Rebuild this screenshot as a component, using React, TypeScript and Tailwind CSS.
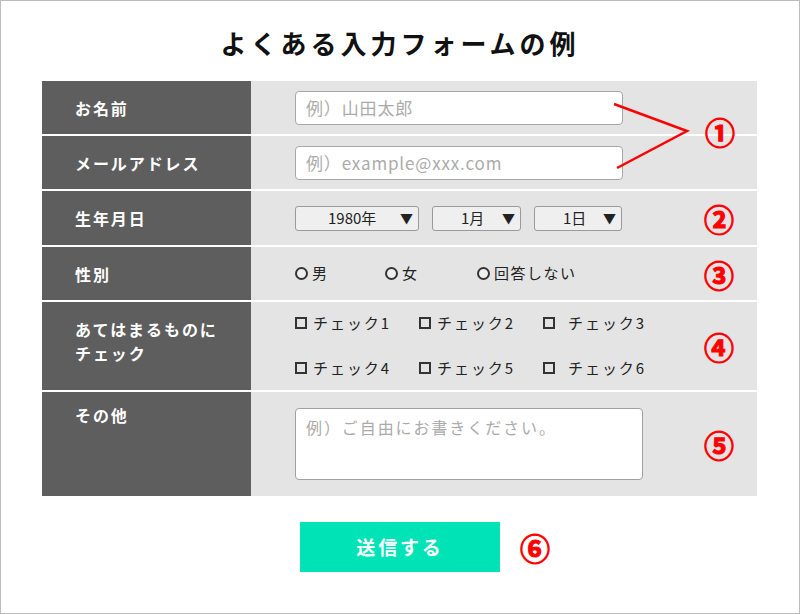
import React from 'react'

const jp = { fontFamily: '"Noto Sans CJK JP", "Noto Sans", sans-serif' }

function Num({ n }: { n: string }) {
  return (
    <div className="w-[40px] mr-[18px] flex justify-center text-[30px] font-bold leading-none text-[#ff0000] [-webkit-text-stroke:1px_#ff0000]">
      {n}
    </div>
  )
}

interface RowProps {
  label: React.ReactNode
  h: string
  labelPad?: string
  num?: string
  children: React.ReactNode
}

function Row({ label, h, labelPad = 'pt-[15px]', num, children }: RowProps) {
  return (
    <div className={`flex ${h}`}>
      <div
        className={`w-[209px] shrink-0 bg-[#5e5e5e] pl-[33px] ${labelPad} text-white font-bold text-[16px] leading-[24px] tracking-[0.12em]`}
      >
        {label}
      </div>
      <div className="flex-1 bg-[#e4e4e4] flex items-center pl-[44px]">
        <div className="flex-1">{children}</div>
        {num ? <Num n={num} /> : <div className="w-[40px] mr-[18px]" />}
      </div>
    </div>
  )
}

function Select({ w, text, textPad }: { w: string; text: string; textPad: string }) {
  return (
    <div
      className={`${w} h-[25px] rounded-[3px] border border-[#9a9a9a] bg-[#efefef] flex items-center text-[15px] text-[#222]`}
    >
      <span className={`${textPad}`}>{text}</span>
      <span className="ml-auto mr-[5px] text-[13px]">▼</span>
    </div>
  )
}

function Radio({ label }: { label: string }) {
  return (
    <div className="flex items-center gap-[4px] text-[15px] text-[#222] tracking-[0.1em]">
      <span className="w-[13px] h-[13px] rounded-full border-2 border-[#333] bg-white/40" />
      <span>{label}</span>
    </div>
  )
}

function Check({ label, wide }: { label: string; wide?: boolean }) {
  return (
    <div className={`flex items-center ${wide ? 'gap-[13px]' : 'gap-[6px]'} text-[15px] text-[#222] tracking-[0.13em]`}>
      <span className="w-[12px] h-[12px] border-2 border-[#333]" />
      <span>{label}</span>
    </div>
  )
}

export default function App() {
  return (
    <div
      className="box-border w-[800px] h-[614px] border border-[#bcbcbc] bg-white flex flex-col"
      style={jp}
    >
      <div className="h-[80px] flex items-center justify-center pt-[2px]">
        <h1 className="text-[26px] font-bold tracking-[4px] text-[#111]">よくある入力フォームの例</h1>
      </div>

      <div className="relative ml-[41px] w-[715px] flex flex-col gap-[2px]">
        <Row label="お名前" h="h-[53px]">
          <input
            className="w-[328px] h-[34px] rounded-[4px] border border-[#a8a8a8] bg-white px-[10px] text-[17px] tracking-[0.05em] outline-none placeholder:text-[#ababab]"
            placeholder="例）山田太郎"
          />
        </Row>
        <Row label="メールアドレス" h="h-[53px]">
          <input
            className="w-[328px] h-[34px] rounded-[4px] border border-[#a8a8a8] bg-white px-[10px] text-[17px] tracking-[0.05em] outline-none placeholder:text-[#ababab]"
            placeholder="例）example@xxx.com"
          />
        </Row>
        <Row label="生年月日" h="h-[54px]" num="②">
          <div className="flex gap-[13px]">
            <Select w="w-[124px]" text="1980年" textPad="pl-[32px]" />
            <Select w="w-[89px]" text="1月" textPad="pl-[28px]" />
            <Select w="w-[88px]" text="1日" textPad="pl-[28px]" />
          </div>
        </Row>
        <Row label="性別" h="h-[53px]" num="③">
          <div className="flex">
            <div className="w-[90px]">
              <Radio label="男" />
            </div>
            <div className="w-[92px]">
              <Radio label="女" />
            </div>
            <Radio label="回答しない" />
          </div>
        </Row>
        <Row
          label={
            <>
              あてはまるものに
              <br />
              チェック
            </>
          }
          h="h-[88px]"
          num="④"
        >
          <div className="grid grid-cols-[124px_124px_auto] gap-y-[22px] -mt-[1px]">
            <Check label="チェック1" />
            <Check label="チェック2" />
            <Check label="チェック3" wide />
            <Check label="チェック4" />
            <Check label="チェック5" />
            <Check label="チェック6" wide />
          </div>
        </Row>
        <Row label="その他" h="h-[104px]" labelPad="pt-[11px]" num="⑤">
          <textarea
            className="block w-[348px] h-[72px] rounded-[4px] border border-[#a0a0a0] bg-white px-[10px] py-[6px] text-[16px] tracking-[0.12em] leading-[24px] resize-none outline-none placeholder:text-[#ababab]"
            placeholder="例）ご自由にお書きください。"
          />
        </Row>

        {/* annotation ① with pointer lines */}
        <svg className="absolute left-0 top-0 pointer-events-none" width="715" height="120">
          <polyline
            points="572,23 645,50 575,87"
            fill="none"
            stroke="#ff0000"
            strokeWidth="2.5"
          />
        </svg>
        <div className="absolute left-[658px] top-[30px] w-[40px] h-[40px] flex items-center justify-center text-[30px] font-bold leading-none text-[#ff0000] [-webkit-text-stroke:1px_#ff0000]">
          ①
        </div>
      </div>

      <div className="grid grid-cols-[1fr_auto_1fr] items-center mt-[26px]">
        <div />
        <button className="w-[200px] h-[50px] bg-[#00e3b7] text-white text-[19px] font-bold tracking-[0.15em]">
          送信する
        </button>
        <div className="pl-[20px] text-[30px] font-bold leading-none text-[#ff0000] [-webkit-text-stroke:1px_#ff0000]">⑥</div>
      </div>
    </div>
  )
}
